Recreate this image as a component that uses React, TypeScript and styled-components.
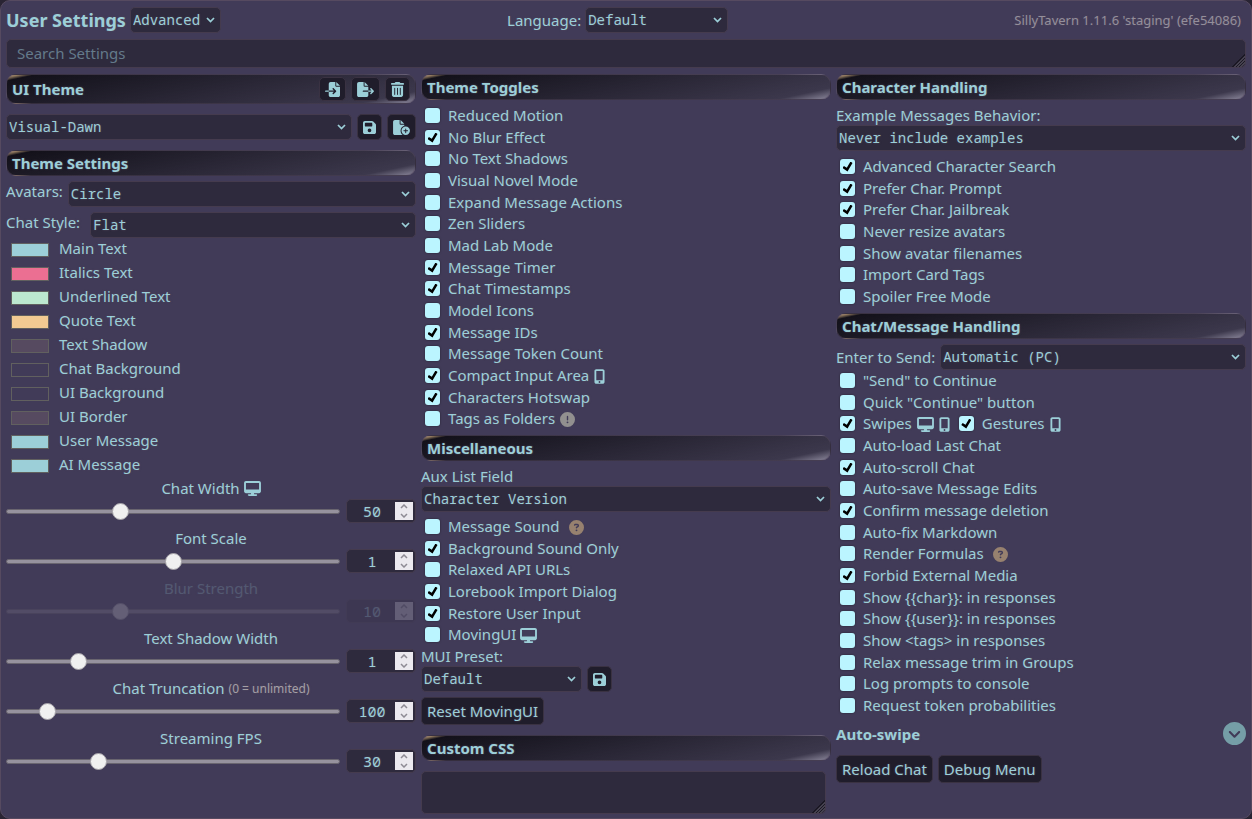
import React, { useId, useRef } from 'react';
import styled, { createGlobalStyle } from 'styled-components';
import {
  FaCircleChevronDown,
  FaCircleExclamation,
  FaCircleQuestion,
  FaDesktop,
  FaFileCirclePlus,
  FaFileExport,
  FaFileImport,
  FaFloppyDisk,
  FaMobileScreenButton,
  FaTrashCan,
} from 'react-icons/fa6';

const color = {
  text: '#9ccfd8',
  panel: '#413b58',
  field: '#2e2a3d',
  button: '#201d2b',
  line: '#453b4e',
  panelLine: '#564a60',
  quote: '#f2ca92',
  box: '#bbf5ff',
};

const sans = `"Noto Sans", "Open Sans", sans-serif`;
const mono = `"Noto Sans Mono", "DejaVu Sans Mono", monospace`;

const GlobalStyle = createGlobalStyle`
  * { box-sizing: border-box; }
  body {
    margin: 0;
    background: #292433;
    color: ${color.text};
    font: 15px/20px ${sans};
    text-shadow: 0 0 2px ${color.panelLine};
  }
`;

const Panel = styled.main`
  display: flex;
  flex-direction: column;
  gap: 6px;
  min-height: 100vh;
  padding: 6px 5px 4px;
  background: ${color.panel};
  border: 1px solid ${color.panelLine};
  border-radius: 10px;
`;

const TopBar = styled.header`
  display: flex;
  justify-content: space-between;
  align-items: center;
`;

const TopGroup = styled.div`
  display: flex;
  align-items: center;
  gap: 4px;
`;

const Title = styled.h1`
  margin: 0;
  font-size: 18px;
  line-height: 24px;
`;

const Version = styled.small`
  padding-right: 5px;
  font-size: 13px;
  color: #948f9b;
`;

const Area = styled.textarea`
  display: block;
  padding: 3px 10px;
  background: ${color.field};
  color: ${color.text};
  border: 1px solid ${color.line};
  border-radius: 5px;
  font: 15px/20px ${sans};
  resize: vertical;
  outline: none;

  &::placeholder {
    color: #647a8b;
  }
  &::-webkit-scrollbar {
    width: 11px;
    height: 11px;
  }
  &::-webkit-resizer {
    background: linear-gradient(
      135deg,
      transparent 56%,
      #1b1824 56% 61%,
      #45414f 61% 67%,
      #1b1824 67% 72%,
      #45414f 72% 78%,
      #1b1824 78% 83%,
      #45414f 83% 88%,
      transparent 88%
    );
  }
`;

const SearchBox = styled(Area)`
  width: 100%;
  height: 29px;
  overflow: hidden;
`;

const CssBox = styled(Area)`
  width: calc(100% - 5px);
  height: 43px;
  margin-top: 10px;
`;

const Columns = styled.div`
  display: grid;
  grid-template-columns: repeat(3, minmax(0, 1fr));
  gap: 5px;
`;

const Column = styled.section`
  display: flex;
  flex-direction: column;
`;

const SectionHead = styled.div<{ $top?: number; $bottom?: number }>`
  display: flex;
  align-items: center;
  justify-content: space-between;
  margin-top: ${(p) => p.$top ?? 0}px;
  margin-bottom: ${(p) => p.$bottom ?? 5}px;
  padding: 2px 5px;
  border: 1px solid rgba(86, 74, 96, 0.5);
  border-radius: 10px;
  background-image: linear-gradient(
    348deg,
    rgba(255, 255, 255, 0.3) 2%,
    rgba(50, 50, 50, 0.3) 10%,
    rgba(0, 0, 0, 0.7) 95%,
    ${color.quote} 100%
  );
`;

const SectionTitle = styled.h2`
  margin: 0;
  font-size: 15px;
  line-height: 20px;
`;

const HeadButtons = styled.div`
  display: flex;
  gap: 5px;
`;

const Button = styled.button`
  display: flex;
  align-items: center;
  justify-content: center;
  height: 28px;
  padding: 0 5px;
  background: ${color.button};
  color: ${color.text};
  border: 1px solid #3a3242;
  border-radius: 5px;
  font: 15px/20px ${sans};
  text-shadow: inherit;
  cursor: pointer;
`;

const IconButton = styled(Button)<{ $icon: number }>`
  height: 24px;

  svg {
    width: ${(p) => p.$icon}px;
    height: 15px;
  }
`;

const SaveButton = styled(IconButton)`
  height: 26px;
`;

const ButtonRow = styled.div<{ $top: number }>`
  display: flex;
  gap: 5px;
  margin-top: ${(p) => p.$top}px;
`;

const FieldRow = styled.div<{ $gap?: number; $bottom?: number; $top?: boolean }>`
  display: flex;
  align-items: ${(p) => (p.$top ? 'flex-start' : 'center')};
  gap: ${(p) => p.$gap ?? 5}px;
  margin-bottom: ${(p) => p.$bottom ?? 0}px;
`;

const FieldLabel = styled.label`
  line-height: 20px;
  white-space: nowrap;
`;

const SelectWrap = styled.span<{ $width?: number }>`
  position: relative;
  display: block;
  ${(p) => (p.$width ? `width: ${p.$width}px;` : 'flex: 1;')}
  min-width: 0;
`;

const SelectField = styled.select`
  display: block;
  width: 100%;
  height: 26px;
  padding: 0 18px 0 2px;
  appearance: none;
  background: ${color.field};
  color: ${color.text};
  border: 1px solid ${color.line};
  border-radius: 5px;
  font: 14px/20px ${mono};
  text-shadow: inherit;
  outline: none;
`;

const Arrow = styled.svg`
  position: absolute;
  right: 6px;
  top: 10px;
  width: 9px;
  height: 6px;
  pointer-events: none;
`;

const ColorRow = styled.label`
  display: flex;
  gap: 10px;
  height: 24px;
  padding-left: 5px;
  line-height: 20px;
`;

const Swatch = styled.input`
  width: 38px;
  height: 14px;
  margin: 5px 0 0;
  padding: 0;
  appearance: none;
  border: 1px solid #61605f;
  background: none;

  &::-webkit-color-swatch-wrapper {
    padding: 0;
  }
  &::-webkit-color-swatch {
    border: 0;
    border-radius: 0;
  }
`;

const SliderBlock = styled.div<{ $off?: boolean }>`
  padding-bottom: 5px;
  opacity: ${(p) => (p.$off ? 0.2 : 1)};
`;

const SliderTitle = styled.label`
  display: flex;
  align-items: center;
  justify-content: center;
  gap: 4px;
  line-height: 21px;

  small {
    font-size: 12px;
    color: #a39fa6;
  }
`;

const Range = styled.input`
  flex: 1;
  min-width: 0;
  height: 16px;
  margin: 0;
  appearance: none;
  background: none;

  &::-webkit-slider-runnable-track {
    height: 5px;
    border: 1px solid #69656f;
    border-radius: 3px;
    background: #96929e;
  }
  &::-webkit-slider-thumb {
    appearance: none;
    width: 17px;
    height: 17px;
    margin-top: -7px;
    border: 1px solid #a5a2a8;
    border-radius: 50%;
    background: #f0f0f0;
  }
`;

const NumberBox = styled.span`
  display: flex;
  align-items: center;
  width: 70px;
  height: 24px;
  padding: 0 2px;
  background: ${color.field};
  border: 1px solid ${color.line};
  border-radius: 5px;
`;

const NumberField = styled.input`
  flex: 1;
  min-width: 0;
  padding: 0;
  appearance: textfield;
  border: 0;
  outline: none;
  background: none;
  color: ${color.text};
  font: 15px/20px ${mono};
  text-align: center;
  text-shadow: inherit;

  &::-webkit-inner-spin-button {
    appearance: none;
  }
`;

const Stepper = styled.span`
  display: grid;
  width: 18px;
  height: 18px;
  background: #ebe9ef;
`;

const StepButton = styled.button`
  display: flex;
  align-items: center;
  justify-content: center;
  height: 9px;
  padding: 0;
  border: 0;
  background: none;
  color: #8d8a94;
`;

const CheckList = styled.ul`
  margin: 0;
  padding: 0 0 0 4px;
  list-style: none;
`;

const CheckItem = styled.li`
  display: flex;
  gap: 9px;
  height: 22px;

  &:nth-child(3n + 2) {
    height: 21px;
  }
`;

const CheckLabel = styled.label`
  display: flex;
  height: 22px;
  line-height: 20px;
  white-space: nowrap;
`;

const CheckBox = styled.input`
  display: grid;
  place-content: center;
  width: 15px;
  height: 15px;
  margin: 3px 8px 0 0;
  appearance: none;
  background: ${color.box};
  border-radius: 3px;
  box-shadow: 0 0 2px rgba(0, 0, 0, 0.5);

  &:checked::before {
    content: '';
    width: 10px;
    height: 10px;
    background: #000;
    clip-path: polygon(14% 44%, 0 65%, 50% 100%, 100% 16%, 80% 0%, 43% 62%);
  }
`;

const Glyph = styled.span<{ $wide: number; $gap: number; $tint?: string }>`
  display: inline-flex;
  align-items: center;
  margin-left: ${(p) => p.$gap}px;
  color: ${(p) => p.$tint ?? 'inherit'};

  svg {
    width: ${(p) => p.$wide}px;
    height: 15px;
  }
`;

const Drawer = styled.div`
  display: flex;
  align-items: center;
  justify-content: space-between;
  height: 23px;
  margin-top: 5px;
`;

const DrawerToggle = styled.button`
  display: flex;
  padding: 0;
  border: 0;
  background: none;
  color: #759ea7;
  font-size: 23px;
`;

const Desktop = ({ gap = 5 }: { gap?: number }) => (
  <Glyph $wide={17} $gap={gap}>
    <FaDesktop />
  </Glyph>
);
const Mobile = () => (
  <Glyph $wide={11} $gap={5}>
    <FaMobileScreenButton />
  </Glyph>
);
const Warning = () => (
  <Glyph $wide={15} $gap={5} $tint="#92908f">
    <FaCircleExclamation />
  </Glyph>
);
const Help = () => (
  <Glyph $wide={15} $gap={9} $tint="#97816f">
    <FaCircleQuestion />
  </Glyph>
);

type SelectProps = { id?: string; value: string; width?: number; label?: string };

function Select({ id, value, width, label }: SelectProps) {
  return (
    <SelectWrap $width={width}>
      <SelectField id={id} aria-label={label} defaultValue={value}>
        <option>{value}</option>
      </SelectField>
      <Arrow viewBox="0 0 9 6" fill="none" stroke={color.text} strokeWidth="1.7">
        <path d="M1 1l3.5 3.6L8 1" />
      </Arrow>
    </SelectWrap>
  );
}

type Check = { text: string; on?: boolean; icons?: React.ReactNode; extra?: Check };

function CheckField({ text, on, icons }: Check) {
  return (
    <CheckLabel>
      <CheckBox type="checkbox" defaultChecked={on} />
      {text}
      {icons}
    </CheckLabel>
  );
}

function Checks({ items }: { items: Check[] }) {
  return (
    <CheckList>
      {items.map((item) => (
        <CheckItem key={item.text}>
          <CheckField {...item} />
          {item.extra && <CheckField {...item.extra} />}
        </CheckItem>
      ))}
    </CheckList>
  );
}

type SliderProps = {
  title: string;
  note?: string;
  icon?: React.ReactNode;
  min: number;
  max: number;
  step?: number;
  value: number;
  off?: boolean;
};

function Slider({ title, note, icon, min, max, step = 1, value, off }: SliderProps) {
  const id = useId();
  const field = useRef<HTMLInputElement>(null);
  return (
    <SliderBlock $off={off}>
      <SliderTitle htmlFor={id}>
        {title}
        {note && <small>{note}</small>}
        {icon}
      </SliderTitle>
      <FieldRow $gap={6}>
        <Range id={id} type="range" min={min} max={max} step={step} defaultValue={value} disabled={off} />
        <NumberBox>
          <NumberField
            ref={field}
            type="number"
            aria-label={title}
            min={min}
            max={max}
            step={step}
            defaultValue={value}
            disabled={off}
          />
          <Stepper>
            <StepButton aria-label="Increase" disabled={off} onClick={() => field.current?.stepUp()}>
              <svg width="8" height="5" viewBox="0 0 8 5" fill="none" stroke="currentColor" strokeWidth="1.5">
                <path d="M1 4l3-3 3 3" />
              </svg>
            </StepButton>
            <StepButton aria-label="Decrease" disabled={off} onClick={() => field.current?.stepDown()}>
              <svg width="8" height="5" viewBox="0 0 8 5" fill="none" stroke="currentColor" strokeWidth="1.5">
                <path d="M1 1l3 3 3-3" />
              </svg>
            </StepButton>
          </Stepper>
        </NumberBox>
      </FieldRow>
    </SliderBlock>
  );
}

const colors: [string, string][] = [
  ['Main Text', '#9ccfd8'],
  ['Italics Text', '#eb6f92'],
  ['Underlined Text', '#bce8cf'],
  ['Quote Text', '#f2ca92'],
  ['Text Shadow', '#564a60'],
  ['Chat Background', '#413b58'],
  ['UI Background', '#413b58'],
  ['UI Border', '#564a60'],
  ['User Message', '#9ccfd8'],
  ['AI Message', '#9ccfd8'],
];

const themeToggles: Check[] = [
  { text: 'Reduced Motion' },
  { text: 'No Blur Effect', on: true },
  { text: 'No Text Shadows' },
  { text: 'Visual Novel Mode' },
  { text: 'Expand Message Actions' },
  { text: 'Zen Sliders' },
  { text: 'Mad Lab Mode' },
  { text: 'Message Timer', on: true },
  { text: 'Chat Timestamps', on: true },
  { text: 'Model Icons' },
  { text: 'Message IDs', on: true },
  { text: 'Message Token Count' },
  { text: 'Compact Input Area', on: true, icons: <Mobile /> },
  { text: 'Characters Hotswap', on: true },
  { text: 'Tags as Folders', icons: <Warning /> },
];

const miscToggles: Check[] = [
  { text: 'Message Sound', icons: <Help /> },
  { text: 'Background Sound Only', on: true },
  { text: 'Relaxed API URLs' },
  { text: 'Lorebook Import Dialog', on: true },
  { text: 'Restore User Input', on: true },
  { text: 'MovingUI', icons: <Desktop gap={4} /> },
];

const characterToggles: Check[] = [
  { text: 'Advanced Character Search', on: true },
  { text: 'Prefer Char. Prompt', on: true },
  { text: 'Prefer Char. Jailbreak', on: true },
  { text: 'Never resize avatars' },
  { text: 'Show avatar filenames' },
  { text: 'Import Card Tags' },
  { text: 'Spoiler Free Mode' },
];

const chatToggles: Check[] = [
  { text: '"Send" to Continue' },
  { text: 'Quick "Continue" button' },
  {
    text: 'Swipes',
    on: true,
    icons: (
      <>
        <Desktop />
        <Mobile />
      </>
    ),
    extra: { text: 'Gestures', on: true, icons: <Mobile /> },
  },
  { text: 'Auto-load Last Chat' },
  { text: 'Auto-scroll Chat', on: true },
  { text: 'Auto-save Message Edits' },
  { text: 'Confirm message deletion', on: true },
  { text: 'Auto-fix Markdown' },
  { text: 'Render Formulas', icons: <Help /> },
  { text: 'Forbid External Media', on: true },
  { text: 'Show {{char}}: in responses' },
  { text: 'Show {{user}}: in responses' },
  { text: 'Show <tags> in responses' },
  { text: 'Relax message trim in Groups' },
  { text: 'Log prompts to console' },
  { text: 'Request token probabilities' },
];

function ThemeColumn() {
  return (
    <Column>
      <SectionHead $bottom={10}>
        <SectionTitle>UI Theme</SectionTitle>
        <HeadButtons>
          <IconButton $icon={15} aria-label="Import theme"><FaFileImport /></IconButton>
          <IconButton $icon={17} aria-label="Export theme"><FaFileExport /></IconButton>
          <IconButton $icon={13} aria-label="Delete theme"><FaTrashCan /></IconButton>
        </HeadButtons>
      </SectionHead>
      <FieldRow $bottom={10}>
        <Select value="Visual-Dawn" label="UI theme" />
        <SaveButton $icon={13} aria-label="Save theme"><FaFloppyDisk /></SaveButton>
        <SaveButton $icon={17} aria-label="Save as new theme"><FaFileCirclePlus /></SaveButton>
      </FieldRow>
      <SectionHead>
        <SectionTitle>Theme Settings</SectionTitle>
      </SectionHead>
      <FieldRow $top $bottom={5}>
        <FieldLabel htmlFor="avatars">Avatars:</FieldLabel>
        <Select id="avatars" value="Circle" />
      </FieldRow>
      <FieldRow $top $gap={10}>
        <FieldLabel htmlFor="chat-style">Chat Style:</FieldLabel>
        <Select id="chat-style" value="Flat" />
      </FieldRow>
      {colors.map(([name, value]) => (
        <ColorRow key={name}>
          <Swatch type="color" defaultValue={value} />
          {name}
        </ColorRow>
      ))}
      <Slider title="Chat Width" icon={<Desktop gap={0} />} min={25} max={100} value={50} />
      <Slider title="Font Scale" min={0.5} max={1.5} step={0.05} value={1} />
      <Slider title="Blur Strength" min={0} max={30} value={10} off />
      <Slider title="Text Shadow Width" min={0} max={5} value={1} />
      <Slider title="Chat Truncation" note="(0 = unlimited)" min={0} max={1000} value={100} />
      <Slider title="Streaming FPS" min={5} max={100} value={30} />
    </Column>
  );
}

function TogglesColumn() {
  return (
    <Column>
      <SectionHead>
        <SectionTitle>Theme Toggles</SectionTitle>
      </SectionHead>
      <Checks items={themeToggles} />
      <SectionHead $top={5}>
        <SectionTitle>Miscellaneous</SectionTitle>
      </SectionHead>
      <FieldLabel htmlFor="aux-field">Aux List Field</FieldLabel>
      <FieldRow $bottom={4}>
        <Select id="aux-field" value="Character Version" />
      </FieldRow>
      <Checks items={miscToggles} />
      <FieldLabel htmlFor="mui-preset">MUI Preset:</FieldLabel>
      <FieldRow>
        <Select id="mui-preset" value="Default" width={161} />
        <SaveButton $icon={13} aria-label="Save preset"><FaFloppyDisk /></SaveButton>
      </FieldRow>
      <ButtonRow $top={5}>
        <Button>Reset MovingUI</Button>
      </ButtonRow>
      <SectionHead $top={10} $bottom={0}>
        <SectionTitle>Custom CSS</SectionTitle>
      </SectionHead>
      <CssBox aria-label="Custom CSS" />
    </Column>
  );
}

function HandlingColumn() {
  return (
    <Column>
      <SectionHead>
        <SectionTitle>Character Handling</SectionTitle>
      </SectionHead>
      <FieldLabel htmlFor="examples">Example Messages Behavior:</FieldLabel>
      <FieldRow $bottom={5}>
        <Select id="examples" value="Never include examples" />
      </FieldRow>
      <Checks items={characterToggles} />
      <SectionHead $top={5}>
        <SectionTitle>Chat/Message Handling</SectionTitle>
      </SectionHead>
      <FieldRow>
        <FieldLabel htmlFor="enter-send">Enter to Send:</FieldLabel>
        <Select id="enter-send" value="Automatic (PC)" />
      </FieldRow>
      <Checks items={chatToggles} />
      <Drawer>
        <SectionTitle>Auto-swipe</SectionTitle>
        <DrawerToggle aria-label="Expand auto-swipe"><FaCircleChevronDown /></DrawerToggle>
      </Drawer>
      <ButtonRow $top={10}>
        <Button>Reload Chat</Button>
        <Button>Debug Menu</Button>
      </ButtonRow>
    </Column>
  );
}

export default function App() {
  return (
    <>
      <GlobalStyle />
      <Panel>
        <TopBar>
          <TopGroup>
            <Title>User Settings</Title>
            <Select value="Advanced" width={91} label="Settings mode" />
          </TopGroup>
          <TopGroup>
            <FieldLabel htmlFor="language">Language:</FieldLabel>
            <Select id="language" value="Default" width={143} />
          </TopGroup>
          <Version>SillyTavern 1.11.6 'staging' (efe54086)</Version>
        </TopBar>
        <SearchBox rows={1} placeholder="Search Settings" aria-label="Search settings" />
        <Columns>
          <ThemeColumn />
          <TogglesColumn />
          <HandlingColumn />
        </Columns>
      </Panel>
    </>
  );
}
